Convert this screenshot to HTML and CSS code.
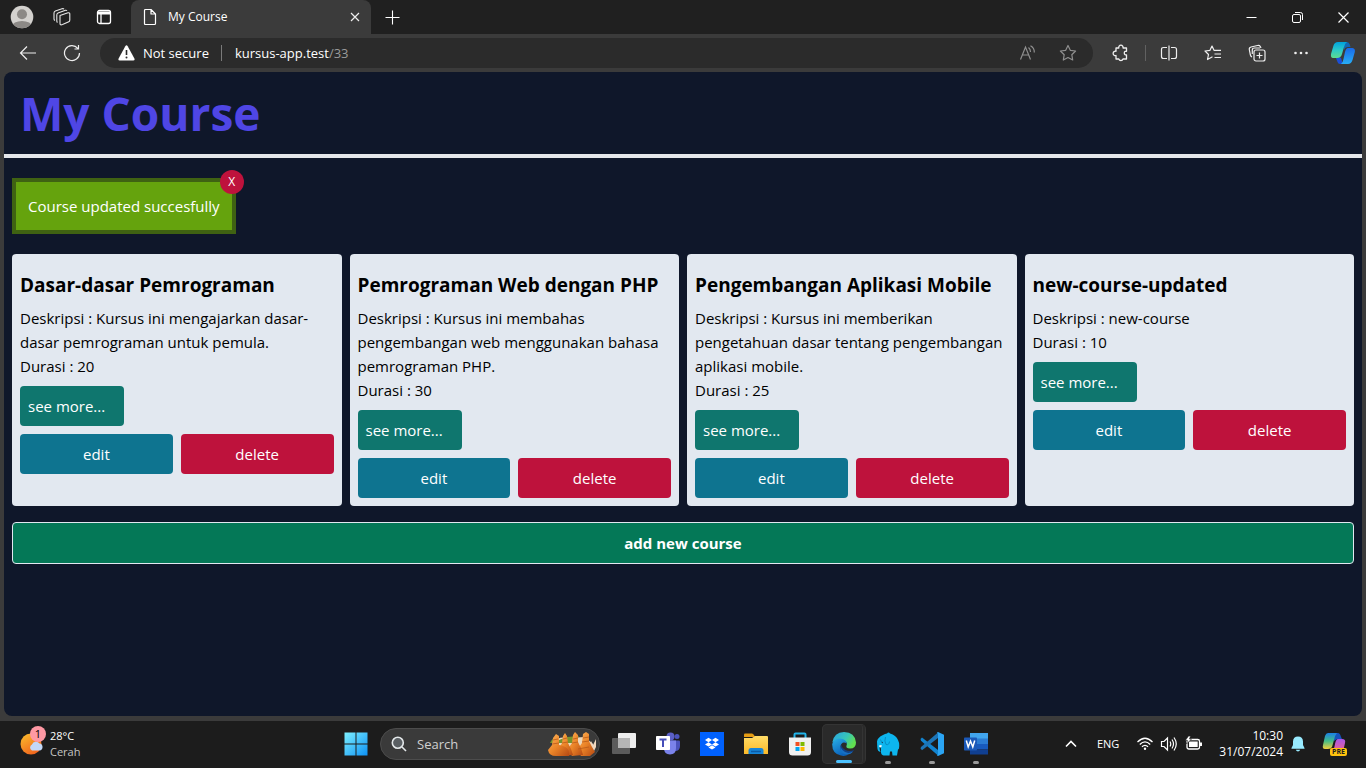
FILE: index.html
```html
<!DOCTYPE html>
<html lang="id">
<head>
<meta charset="utf-8">
<meta name="viewport" content="width=device-width, initial-scale=1">
<title>My Course</title>
<link rel="stylesheet" href="styles.css">
</head>
<body>
<div class="desktop">
  <div class="titlebar">
    <div class="titlebar-tools">
      <button class="icon-btn" aria-label="Profile"><svg width="24" height="24" viewBox="0 0 24 24"><defs><clipPath id="av"><circle cx="12" cy="12" r="11.3"/></clipPath></defs><circle cx="12" cy="12" r="11.3" fill="#d3d1ce"/><g clip-path="url(#av)" fill="#8c8986"><circle cx="12" cy="9.300" r="5"/><ellipse cx="12" cy="21.500" rx="10" ry="5.500"/></g></svg></button>
      <button class="icon-btn" aria-label="Workspaces"><svg width="20" height="20" viewBox="0 0 20 20" fill="none" stroke="#e6e6e6" stroke-width="1.100" stroke-linejoin="round"><path d="M8 8.500 16 5.800Q17.800 5.500 17.800 7V13Q17.800 14.300 16.800 14.700L10.500 17.500Q8 18.500 8 16.500Z"/><path d="M5.500 15.500Q4.800 15 4.800 14V8Q4.800 6.600 6 6.100L13.500 3.300Q14.500 3.100 15 3.800M3 13.500Q2 13 2 12V6Q2 4.500 3.400 4L10 1.700Q11.500 1.400 12 2.300"/></svg></button>
      <button class="icon-btn tab-actions" aria-label="Tab actions"><svg width="18" height="18" viewBox="0 0 18 18" fill="none" stroke="#fff" stroke-width="1.300"><rect x="2.500" y="2.500" width="13" height="13" rx="2"/><path d="M3 5h12" stroke-width="3"/><path d="M6 6v9"/></svg></button>
    </div>
    <div class="tab">
      <svg width="14" height="18" viewBox="0 0 14 18" fill="none" stroke="#fff" stroke-width="1.200" stroke-linejoin="round"><path d="M1.500 2.500Q1.500 1.500 2.500 1.500H8L12.500 6V15.500Q12.500 16.500 11.500 16.500H2.500Q1.500 16.500 1.500 15.500ZM8 1.500V6H12.500"/></svg>
      <span class="tab-title">My Course</span>
      <button class="icon-btn" aria-label="Close tab"><svg width="10" height="10" viewBox="0 0 10 10" stroke="#eee" stroke-width="1.200"><path d="M1 1 9 9M9 1 1 9"/></svg></button>
    </div>
    <button class="icon-btn new-tab" aria-label="New tab"><svg width="15" height="15" viewBox="0 0 15 15" stroke="#fff" stroke-width="1.100"><path d="M7.500 0.500V14.500M.5 7.500H14.500"/></svg></button>
    <div class="window-controls">
      <button class="icon-btn" aria-label="Minimize"><svg width="11" height="11" viewBox="0 0 11 11" stroke="#fff"><path d="M.5 5.500H10.500"/></svg></button>
      <button class="icon-btn" aria-label="Restore"><svg width="11" height="11" viewBox="0 0 11 11" fill="none" stroke="#fff"><rect x=".5" y="2.500" width="8" height="8" rx="1.500"/><path d="M3 .5H8.500Q10.500.5 10.500 2.500V8"/></svg></button>
      <button class="icon-btn" aria-label="Close"><svg width="11" height="11" viewBox="0 0 11 11" stroke="#fff" stroke-width="1.200"><path d="M.5.500 10.500 10.500M10.500.500.500 10.500"/></svg></button>
    </div>
  </div>

  <div class="toolbar">
    <button class="icon-btn tool" aria-label="Back"><svg width="18" height="16" viewBox="0 0 18 16" fill="none" stroke="#eee" stroke-width="1.200"><path d="M17 8H1.500M8 1.500 1.500 8 8 14.500"/></svg></button>
    <button class="icon-btn tool" aria-label="Refresh"><svg width="18" height="18" viewBox="0 0 18 18" fill="none" stroke="#eee" stroke-width="1.200"><path d="M16.500 9A7.500 7.500 0 1 1 14.800 4.300M15.500 1V5H11.500"/></svg></button>
    <div class="address">
      <svg width="17" height="16" viewBox="0 0 17 16"><path d="M7.300 1.300Q8.500-.6 9.700 1.300L16.400 13.500Q17.200 15.500 15.200 15.500H1.800Q-.2 15.500.6 13.500Z" fill="#fff"/><path d="M8.500 5V10" stroke="#2b2b2b" stroke-width="1.600"/><circle cx="8.500" cy="12.500" r="1" fill="#2b2b2b"/></svg>
      <span class="secure">Not secure</span>
      <span class="url">kursus-app.test<span class="path">/33</span></span>
      <button class="icon-btn" aria-label="Read aloud"><svg width="18" height="16" viewBox="0 0 18 16" fill="none" stroke="#8f8f8f" stroke-width="1.200"><path d="M1.500 14.500 6.500 2 11.500 14.500M3.300 10H9.700M9.500 2.500Q11.500 4 11.500 7M11.500.800Q15.500 3 15.300 7.500"/></svg></button>
      <button class="icon-btn" aria-label="Add to favorites"><svg width="18" height="18" viewBox="0 0 18 18" fill="none" stroke="#8f8f8f" stroke-width="1.200" stroke-linejoin="round"><path d="M9 1.500 11.300 6.300 16.600 7 12.800 10.700 13.700 16 9 13.500 4.300 16 5.200 10.700 1.400 7 6.700 6.300Z"/></svg></button>
    </div>
    <div class="toolbar-actions">
      <button class="icon-btn tool" aria-label="Extensions"><svg width="18" height="18" viewBox="0 0 18 18" fill="none" stroke="#eee" stroke-width="1.300" stroke-linejoin="round"><path d="M4 4H6.800A2.200 2.200 0 1 1 11 4H14.500V7.300Q12.300 7 12.300 9T14.500 10.900V15H11A2.200 2.200 0 0 1 6.800 15H4V11.500A2.200 2.200 0 1 1 4 7.300Z"/></svg></button>
      <button class="icon-btn tool split" aria-label="Split screen"><svg width="18" height="18" viewBox="0 0 18 18" fill="none" stroke="#eee" stroke-width="1.200"><path d="M7 3.500H3.500Q1.500 3.500 1.500 5.500V12.500Q1.500 14.500 3.500 14.500H7M11 3.500H14.500Q16.500 3.500 16.500 5.500V12.500Q16.500 14.500 14.500 14.500H11M9 1.500V16.500"/></svg></button>
      <button class="icon-btn tool" aria-label="Favorites"><svg width="18" height="18" viewBox="0 0 18 18" fill="none" stroke="#eee" stroke-width="1.200" stroke-linejoin="round"><path d="M8.500 12.700 3.500 15.500 4.500 10.500 1 7 6 6.300 8 2 10 6.300H17M10.500 10H17M10.500 13.500H17"/></svg></button>
      <button class="icon-btn tool" aria-label="Collections"><svg width="18" height="18" viewBox="0 0 18 18" fill="none" stroke="#eee" stroke-width="1.200"><rect x="6" y="6" width="11" height="11" rx="2"/><path d="M11.500 8.500V14.500M8.500 11.500H14.500M4 13Q2.800 12.500 2.400 11L1.300 5.500Q1 3.500 3 3L9.500 1.500Q11.500 1 12.300 2.500L13 4M4.300 10V6Q4.300 4 6.500 4H12"/></svg></button>
      <button class="icon-btn tool" aria-label="Settings"><svg width="16" height="4" viewBox="0 0 16 4" fill="#eee"><circle cx="2.500" cy="2" r="1.300"/><circle cx="8" cy="2" r="1.300"/><circle cx="13.500" cy="2" r="1.300"/></svg></button>
      <button class="icon-btn tool sidebar" aria-label="Copilot"><svg width="26" height="24" viewBox="0 0 26 24"><defs><linearGradient id="ca" x1="0" y1="0" x2="0" y2="1"><stop stop-color="#00a2dc"/><stop offset=".5" stop-color="#2bc8c9"/><stop offset="1" stop-color="#5fdb8e"/></linearGradient><linearGradient id="cb" x1="0" y1="0" x2="0" y2="1"><stop stop-color="#1a69e8"/><stop offset="1" stop-color="#27aef6"/></linearGradient></defs><path d="M14 1H17Q19 1 19.800 3.500L20.500 6H18Q15 6 14 9Z" fill="#1267b4"/><path d="M6 14 11 17 13 23H10Q8 23 7.500 21L6 17Z" fill="#1b4fd8"/><path d="M8 1H17Q15 2 14 6L12 13Q11 17 7 17H3Q.5 17 1 13L3.500 4.500Q4.500 1 8 1Z" fill="url(#ca)"/><path d="M18 7H22.500Q25.500 7.500 24.800 11L22.500 19Q21.300 23 18 23H11Q12.800 22 13.500 18L15 11Q16 7 18 7Z" fill="url(#cb)"/></svg></button>
    </div>
  </div>

  <div class="viewport">
    <header class="page-header"><h1>My Course</h1></header>
    <main>
      <div class="alert" role="status">Course updated succesfully<button class="alert-close">X</button></div>
      <section class="courses">
        <article class="card">
          <h2>Dasar-dasar Pemrograman</h2>
          <p>Deskripsi : Kursus ini mengajarkan dasar-dasar pemrograman untuk pemula.</p>
          <p>Durasi : 20</p>
          <a class="btn more" href="#">see more...</a>
          <div class="actions"><a class="btn edit" href="#">edit</a><button class="btn delete">delete</button></div>
        </article>
        <article class="card">
          <h2>Pemrograman Web dengan PHP</h2>
          <p>Deskripsi : Kursus ini membahas pengembangan web menggunakan bahasa pemrograman PHP.</p>
          <p>Durasi : 30</p>
          <a class="btn more" href="#">see more...</a>
          <div class="actions"><a class="btn edit" href="#">edit</a><button class="btn delete">delete</button></div>
        </article>
        <article class="card">
          <h2>Pengembangan Aplikasi Mobile</h2>
          <p>Deskripsi : Kursus ini memberikan pengetahuan dasar tentang pengembangan aplikasi mobile.</p>
          <p>Durasi : 25</p>
          <a class="btn more" href="#">see more...</a>
          <div class="actions"><a class="btn edit" href="#">edit</a><button class="btn delete">delete</button></div>
        </article>
        <article class="card">
          <h2>new-course-updated</h2>
          <p>Deskripsi : new-course</p>
          <p>Durasi : 10</p>
          <a class="btn more" href="#">see more...</a>
          <div class="actions"><a class="btn edit" href="#">edit</a><button class="btn delete">delete</button></div>
        </article>
      </section>
      <a class="add" href="#">add new course</a>
    </main>
  </div>

  <footer class="taskbar">
    <div class="weather">
      <div class="weather-icon">
        <svg width="24" height="24" viewBox="0 0 24 24"><defs><linearGradient id="su" x1="0" y1="0" x2=".6" y2="1"><stop stop-color="#fbc02d"/><stop offset="1" stop-color="#f0651d"/></linearGradient></defs><circle cx="11" cy="12" r="10.500" fill="url(#su)"/><path d="M12 18.500A3.300 3.300 0 0 1 12 12.500 4.300 4.300 0 0 1 19.500 11.500 3.600 3.600 0 0 1 20 18.500Z" fill="#c3d8f8"/></svg>
        <span class="weather-badge">1</span>
      </div>
      <div class="weather-text"><span>28°C</span><span class="muted">Cerah</span></div>
    </div>

    <div class="apps">
      <button class="app" aria-label="Start"><svg width="24" height="24" viewBox="0 0 24 24"><defs><linearGradient id="wi" x1="0" y1="0" x2="1" y2="1"><stop stop-color="#7df0ff"/><stop offset="1" stop-color="#0d91f5"/></linearGradient></defs><path d="M.5.500H11.500V11.500H.5ZM12.500.500H23.500V11.500H12.500ZM.5 12.500H11.500V23.500H.5ZM12.500 12.500H23.500V23.500H12.500Z" fill="url(#wi)"/></svg></button>
      <label class="search">
        <svg width="16" height="16" viewBox="0 0 16 16" fill="#5a5f63" stroke="#e4e8ea" stroke-width="1.600"><circle cx="6.800" cy="6.800" r="5.500"/><path d="M11 11 15 15"/></svg>
        <input type="text" placeholder="Search" aria-label="Search">
        <svg width="50" height="26" viewBox="0 0 50 26"><defs><linearGradient id="sh" x1="0" y1="0" x2="1" y2="1"><stop stop-color="#ffb65c"/><stop offset=".5" stop-color="#ea8428"/><stop offset="1" stop-color="#b54812"/></linearGradient></defs><path d="M5 12Q12 5 20 7L38 6 46 13V21H5Z" fill="#ecd8bd"/><path d="M3 12Q6 5 12 9L20 6 32 5 28 12Z" fill="#74942e"/><path d="M44 10 46 14 49 8 49 16 46 22 40 23Z" fill="#f0d7bf"/><g fill="url(#sh)"><path d="M36 3 39 1 42 3 42 10 45 16 48 21 43 25H34L30 19 35 12Z"/><path d="M26 4 28 1 31 4 31 11 34 17 36 24 25 25 20 19 25 12Z"/><path d="M16 5 18 2 20 5 21 12 24 18 26 24 15 25 11 19 15 12Z"/><path d="M6 7 9 3 12 5 12 14Q24 16 22 25H9Q2 25 1 19L5 14Z"/></g><path d="M6 9 11 8M5 13 12 12M16 8 20 7M15 12 21 11M26 8 31 7M25 12 31 11M36 7 42 6M35 11 42 10M31 18 42 16" stroke="#b95b1b" stroke-width=".8" fill="none"/></svg>
      </label>
      <button class="app" aria-label="Task view"><svg width="24" height="24" viewBox="0 0 24 24"><rect y="6" width="18" height="16" rx="1" fill="#5b5b5b"/><rect x="6" y="1" width="18" height="15" rx="1" fill="#eee"/><path d="M6 6H18V16H6Z" fill="#b5b5b5"/></svg></button>
      <button class="app" aria-label="Teams"><svg width="24" height="24" viewBox="0 0 24 24"><circle cx="14.500" cy="4.500" r="4" fill="#5b5fc7"/><circle cx="21" cy="4.500" r="2.500" fill="#4b53bc"/><path d="M15 8.500H23Q24 8.500 24 9.500V14Q24 19 19 19H15Z" fill="#4b53bc"/><path d="M8 8.500H20V16Q20 22.500 14 22.500T8 16Z" fill="#7b83eb"/><rect y="4" width="14" height="14" rx=".8" fill="#fff"/><path d="M3.500 7.500H10.500M7 7.500V15" stroke="#464eb8" stroke-width="2"/></svg></button>
      <button class="app" aria-label="Dropbox"><svg width="24" height="24" viewBox="0 0 24 24"><path d="M0 0H24V24H0Z" fill="#0061fe"/><path d="M8.500 5.800 12 8 8.500 10.200 5 8ZM15.500 5.800 19 8 15.500 10.200 12 8ZM8.500 10.200 12 12.400 8.500 14.600 5 12.400ZM15.500 10.200 19 12.400 15.500 14.600 12 12.400ZM8.500 15.400 12 13.200 15.500 15.400 12 17.600Z" fill="#fff"/></svg></button>
      <button class="app" aria-label="File Explorer"><svg width="24" height="24" viewBox="0 0 24 24"><defs><linearGradient id="fo" x1="0" y1="0" x2="0" y2="1"><stop stop-color="#ffdc67"/><stop offset="1" stop-color="#fbb928"/></linearGradient></defs><path d="M0 2.500Q0 1.500 1 1.500H8Q9 1.500 10 3L11 5H0Z" fill="#e59c13"/><path d="M0 6H8L11 4H23Q24 4 24 5V22H0Z" fill="url(#fo)"/><path d="M4.500 22V18.500Q4.500 16 7 16H17Q19.500 16 19.500 18.500V22Z" fill="#1685d8"/><path d="M7 19.500H17" stroke="#0b5aa5" stroke-width="1.500"/></svg></button>
      <button class="app" aria-label="Microsoft Store"><svg width="24" height="24" viewBox="0 0 24 24"><path d="M6.500 6V2.500Q6.500 1.500 7.500 1.500H16.500Q17.500 1.500 17.500 2.500V6" fill="none" stroke="#22b4ea" stroke-width="2"/><path d="M1 5.500H23V20Q23 23.500 19.500 23.500H4.500Q1 23.500 1 20Z" fill="#f0f0f0"/><path d="M7.500 10H11.500V14H7.500Z" fill="#f25022"/><path d="M12.500 10H16.500V14H12.500Z" fill="#7fba00"/><path d="M7.500 15H11.500V19H7.500Z" fill="#00a4ef"/><path d="M12.500 15H16.500V19H12.500Z" fill="#ffb900"/></svg></button>
      <button class="app active" aria-label="Edge"><svg width="24" height="24" viewBox="0 0 24 24"><defs><linearGradient id="e1" x1="0" y1="0" x2="1" y2=".5"><stop offset=".1" stop-color="#2ba9df"/><stop offset=".6" stop-color="#37c6b8"/><stop offset="1" stop-color="#62df4e"/></linearGradient><linearGradient id="e2" x1="0" y1="0" x2=".5" y2="1"><stop stop-color="#29b0e8"/><stop offset="1" stop-color="#0b62bb"/></linearGradient></defs><path d="M.3 10.500Q2 .2 12 0 23 .2 24 10.500 24 16.500 18 16.500 13.500 16.300 14.500 13.800 16 10 12 8.500 7 6 .3 10.500Z" fill="url(#e1)"/><path d="M.2 12Q2 6.500 8 6.500 14 6.800 15 11.500 10 8.500 8.500 14 8.500 22.500 16.500 22.500 13 24.500 9 23.600 0 21.500.2 12Z" fill="url(#e2)"/><path d="M9.300 12.500Q6.500 19 12.500 21.500 18 23.500 22.200 18 17.500 20 13.500 18 9.500 15.500 9.300 12.500Z" fill="#123f83"/><path d="M8.500 14Q7 21 14 22.500 18.500 23 21 19.500 15 23 10.500 18 8.500 16 8.500 14Z" fill="#1670c4"/></svg><span class="dot"></span></button>
      <button class="app running" aria-label="Elephant"><svg width="24" height="24" viewBox="0 0 24 24"><path d="M7 3Q9 1.500 11 1.500Q12.500-.5 14 1.500Q20 3 22 8Q24 12 22.800 17L22 17.500 21 23.500H16.500L16 19.500H14L13.500 23.500H7.500Q4.500 23 5 18L4.800 15 3.500 15.500Q3.600 18 4.500 20Q1.500 19.500 1.300 15.500L1 9.500Q1.500 5.500 7 3Z" fill="#0db5ee"/><path d="M9.500 5Q8 9 10 12.500 13 13.500 13.500 9.500M4.500 7.500 5.500 10" fill="none" stroke="#0789bf" stroke-width=".9"/><path d="M3.500 13 6 13.500 5 15.500 3.200 15Z" fill="#fff"/><circle cx="6.300" cy="10.500" r=".7" fill="#144664"/></svg><span class="dot"></span></button>
      <button class="app running" aria-label="Visual Studio Code"><svg width="24" height="24" viewBox="0 0 24 24"><path d="M.5 7 2 5.500 18 18V23.500L1 8.800Z" fill="#1284d0"/><path d="M.5 16.500 2 18.200 18 6V.5L1 15Z" fill="#1d75b7"/><path d="M17 .5 18 0 24 2.800V21.200L18 24 17 23.500 18 22V2Z" fill="#2ba5f4"/></svg><span class="dot"></span></button>
      <button class="app running" aria-label="Word"><svg width="24" height="24" viewBox="0 0 24 24"><path d="M6 1H24V7H6Z" fill="#41a5ee"/><path d="M6 6.500H24V12H6Z" fill="#2b7cd3"/><path d="M6 12H24V17.500H6Z" fill="#185abd"/><path d="M6 17.500H24V22.500H6Z" fill="#103f91"/><rect y="5.500" width="13" height="13" rx=".8" fill="#1b59b8"/><path d="M2.300 8.500 4.200 15 6.500 9 8.800 15 10.700 8.500" fill="none" stroke="#fff" stroke-width="1.500"/></svg><span class="dot"></span></button>
    </div>

    <div class="tray">
      <button class="icon-btn" aria-label="Show hidden icons"><svg width="12" height="8" viewBox="0 0 12 8" fill="none" stroke="#fff" stroke-width="1.600"><path d="M1 6.500 6 1.500 11 6.500"/></svg></button>
      <span class="lang">ENG</span>
      <div class="status">
        <svg width="16" height="14" viewBox="0 0 16 14" fill="none" stroke="#fff" stroke-width="1.300"><path d="M.5 5Q8-2.500 15.500 5M2.800 7.500Q8 2.300 13.200 7.500M5 9.800Q8 7 11 9.800"/><circle cx="8" cy="11.700" r="1.200" fill="#fff" stroke="none"/></svg>
        <svg width="18" height="16" viewBox="0 0 18 16" fill="none" stroke="#fff" stroke-width="1.200"><path d="M1.500 5.500H4L7.500 2V14L4 10.500H1.500ZM10 5.500Q11.500 8 10 10.500M12 3.500Q15 8 12 12.500M14 1.500Q18.500 8 14 14.500"/></svg>
        <svg width="17" height="16" viewBox="0 0 17 16"><rect x="2" y="3.500" width="12.500" height="9.500" rx="1.800" fill="none" stroke="#fff" stroke-width="1.300"/><path d="M4 5.500H12.700V11H4ZM15 6.500H17V10H15Z" fill="#fff"/><path d="M3.500 0 .3 4.500H2.500L1.500 8 6.500 3H4.500L5.500 0Z" fill="#fff" stroke="#1c1c1c" stroke-width=".6"/></svg>
      </div>
      <div class="clock"><span>10:30</span><span>31/07/2024</span></div>
      <button class="icon-btn" aria-label="Notifications"><svg width="14" height="16" viewBox="0 0 14 16" fill="#99ebff"><path d="M7 .5Q11.800.500 12 5.500V9L13.500 12V12.800H.5V12L2 9V5.500Q2.200.5 7 .5ZM4.800 13.700H9.200Q8.500 15.500 7 15.500T4.800 13.700Z"/></svg></button>
      <button class="icon-btn copilot" aria-label="Copilot preview"><svg width="24" height="24" viewBox="0 0 24 24"><defs><linearGradient id="p1" x1="0" y1="0" x2="0" y2="1"><stop stop-color="#1b7fe5"/><stop offset=".5" stop-color="#42bd86"/><stop offset="1" stop-color="#f1cf3d"/></linearGradient><linearGradient id="p2" x1="0" y1="0" x2="0" y2="1"><stop stop-color="#a856e8"/><stop offset="1" stop-color="#f0648b"/></linearGradient></defs><path d="M12 1H16Q18 1 19 5L20 7H15L12 9Z" fill="#1652bd"/><path d="M6 1H15Q13 3 12 8L10 15Q9 17 6 17H3Q0 17 1 13L3 4Q4 1 6 1Z" fill="url(#p1)"/><path d="M16 7H20Q24 7 23 11L21 20H10Q12 18 13 12Q14 7 16 7Z" fill="url(#p2)"/></svg><span class="pre">PRE</span></button>
    </div>
  </footer>
</div>
</body>
</html>
```

FILE: styles.css
```css
* {
  box-sizing: border-box;
}

body {
  margin: 0;
  font-family: "Open Sans", "Noto Sans", sans-serif;
  font-size: 15px;
  line-height: 24px;
  color: #fff;
}

h1, h2, p {
  margin: 0;
}

button {
  font: inherit;
  color: inherit;
  border: 0;
  padding: 0;
  background: none;
}

a {
  color: inherit;
  text-decoration: none;
}

svg {
  display: block;
  flex: none;
}

.desktop {
  display: flex;
  flex-direction: column;
  min-height: 100vh;
  background: #3b3b3b;
}

.icon-btn {
  display: flex;
  align-items: center;
  justify-content: center;
}

/* Browser chrome */
.titlebar {
  display: flex;
  align-items: center;
  height: 34px;
  background: #202020;
}

.titlebar-tools {
  display: flex;
  align-items: center;
  width: 131px;
  padding-left: 10px;
  gap: 18px;
}

.tab-actions {
  margin-left: 5px;
}

.tab {
  display: flex;
  align-items: center;
  align-self: stretch;
  width: 240px;
  padding: 0 11px 0 12px;
  border-radius: 8px 8px 0 0;
  background: #3b3b3b;
  font-size: 12px;
}

.tab-title {
  flex: 1;
  padding-left: 11px;
}

.new-tab {
  margin-left: 14px;
}

.window-controls {
  display: flex;
  margin-left: auto;
}

.window-controls .icon-btn {
  width: 46px;
}

.toolbar {
  display: flex;
  align-items: center;
  height: 38px;
  padding: 0 3px 0 6px;
  background: #3b3b3b;
}

.tool {
  width: 44px;
  height: 30px;
}

.address {
  display: flex;
  flex: 1;
  align-items: center;
  height: 30px;
  margin: 0 6px;
  padding: 0 16px 0 18px;
  border-radius: 15px;
  background: #2b2b2b;
  font-size: 13px;
}

.secure {
  padding: 0 12px 0 8px;
  line-height: 16px;
  border-right: 1px solid #7a7a7a;
}

.url {
  flex: 1;
  padding-left: 13px;
}

.path {
  color: #9a9a9a;
}

.address .icon-btn {
  margin-left: 22px;
}

.toolbar-actions {
  display: flex;
}

.split {
  position: relative;
  width: 48px;
  padding-left: 4px;
}

.split::before {
  content: "";
  position: absolute;
  left: 2px;
  top: 7px;
  width: 1px;
  height: 16px;
  background: #616161;
}

.sidebar {
  width: 40px;
}

/* Course page */
.viewport {
  flex: 1;
  margin: 0 4px 5px;
  border-radius: 8px;
  background: #0f172a;
  overflow: hidden;
}

.page-header {
  padding: 16px;
  border-bottom: 4px solid #e5e7eb;
}

h1 {
  color: #4f46e5;
  font-size: 46px;
  line-height: 50px;
  font-weight: 700;
}

main {
  padding: 20px 8px;
}

.alert {
  position: relative;
  width: fit-content;
  padding: 12px;
  border: 4px solid #3f6212;
  background: #65a30d;
}

.alert-close {
  position: absolute;
  top: -12px;
  right: -12px;
  width: 24px;
  height: 24px;
  border-radius: 50%;
  background: #be123c;
  font-size: 12px;
}

.courses {
  display: grid;
  grid-template-columns: repeat(4, 1fr);
  gap: 8px;
  margin: 20px 0 16px;
}

.card {
  padding: 8px;
  border-radius: 4px;
  background: #e2e8f0;
  color: #000;
}

h2 {
  margin: 8px 0 6px;
  font-size: 19px;
  line-height: 30px;
  font-weight: 700;
}

.btn {
  display: block;
  padding: 8px;
  border-radius: 4px;
  color: #fff;
  text-align: center;
}

.more {
  width: 33.333%;
  margin: 8px 0;
  background: #0f766e;
  text-align: left;
  white-space: nowrap;
}

.actions {
  display: grid;
  grid-template-columns: 1fr 1fr;
  gap: 8px;
}

.edit {
  background: #0e7490;
}

.delete {
  background: #be123c;
}

.add {
  display: block;
  padding: 8px;
  border: 1px solid #e2e8f0;
  border-radius: 4px;
  background: #047857;
  text-align: center;
  font-weight: 700;
}

/* Taskbar */
.taskbar {
  display: flex;
  align-items: center;
  height: 47px;
  padding-bottom: 2px;
  background: #1c1c1c;
  font-size: 11px;
  line-height: 16px;
}

.weather {
  display: flex;
  align-items: center;
  width: 334px;
  padding-left: 20px;
  gap: 6px;
}

.weather-icon {
  position: relative;
}

.weather-badge {
  position: absolute;
  top: -6px;
  right: -2px;
  width: 16px;
  height: 16px;
  border-radius: 50%;
  background: #ff99a4;
  color: #000;
  text-align: center;
}

.weather-text,
.clock {
  display: flex;
  flex-direction: column;
}

.muted {
  color: #c5c5c5;
}

.apps {
  display: flex;
  align-items: center;
}

.app {
  position: relative;
  display: flex;
  align-items: center;
  justify-content: center;
  width: 44px;
  height: 40px;
}

.active {
  padding-left: 3px;
  border: 1px solid #343434;
  border-right: 4px double #343434;
  border-radius: 5px;
  background: #2a2a2a;
}

.dot {
  position: absolute;
  left: 50%;
  bottom: 0;
  width: 6px;
  height: 3px;
  margin-left: -3px;
  border-radius: 2px;
  background: #9a9a9a;
}

.active .dot {
  width: 16px;
  margin-left: -7px;
  background: #4cc2ff;
}

.search {
  display: flex;
  align-items: center;
  width: 220px;
  height: 32px;
  margin: 0 2px;
  padding: 0 2px 0 10px;
  border: 1px solid #4c4c4c;
  border-radius: 16px;
  background: #3a3a3a;
}

.search input {
  flex: 1;
  min-width: 0;
  padding: 0 0 0 10px;
  border: 0;
  background: none;
  color: #fff;
  font: inherit;
  font-size: 13px;
}

.search input::placeholder {
  color: #d0d0d0;
  opacity: 1;
}

.tray {
  display: flex;
  align-items: center;
  margin-left: auto;
  padding-right: 20px;
}

.lang {
  margin: 0 18px 0 20px;
}

.status {
  display: flex;
  align-items: center;
  gap: 7px;
  margin-right: 17px;
}

.clock {
  margin-right: 8px;
  text-align: right;
  font-size: 12px;
}

.copilot {
  position: relative;
  margin-left: 17px;
}

.pre {
  position: absolute;
  right: -1px;
  bottom: 0;
  padding: 0 2px;
  border-radius: 2px;
  background: #ffc20e;
  color: #1c1c1c;
  font-size: 7px;
  line-height: 8px;
  font-weight: 700;
}
```
